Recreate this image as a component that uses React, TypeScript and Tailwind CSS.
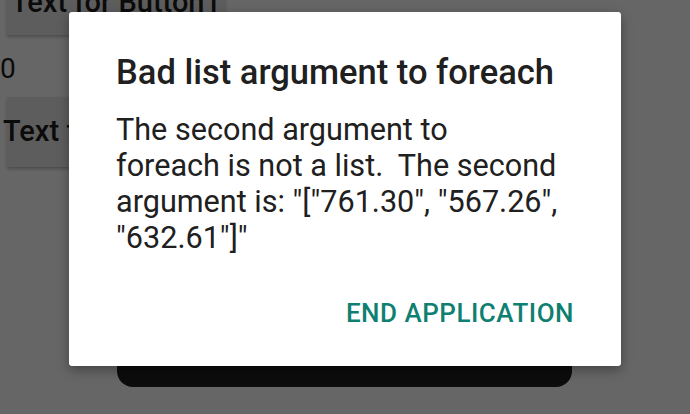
export default function App() {
  return (
    <div className="relative h-[414px] w-[690px] overflow-hidden bg-[#666666] font-['Roboto',sans-serif] text-[#0b0b0b]">
      {/* app content behind the dim */}
      <div className="flex flex-col items-start">
        <div className="ml-[7px] mt-[-30px] flex h-[65px] w-[218px] items-center justify-center bg-[#5d5d5d] shadow-[0_2px_3px_rgba(0,0,0,0.25)]">
          <span className="text-[29px] font-medium">Text for Button1</span>
        </div>
        <span className="mt-[18px] text-[28px] leading-[32px]">0</span>
        <div className="ml-[7px] mt-[12px] flex h-[70px] w-[218px] items-center bg-[#5d5d5d] shadow-[0_2px_3px_rgba(0,0,0,0.25)]">
          <span className="ml-[-4px] text-[29px] font-medium">Text for Button2</span>
        </div>
        <div className="ml-[117px] mt-[150px] h-[70px] w-[455px] rounded-b-[16px] bg-[#0c0c0c]" />
      </div>

      {/* alert dialog */}
      <div className="absolute left-[69px] top-[12px] flex h-[354px] w-[552px] flex-col rounded-[3px] bg-white px-[47px] pt-[39px] shadow-[0_4px_12px_rgba(0,0,0,0.35)]">
        <h2 className="text-[34.5px] font-medium leading-[42px] text-[#202020]">Bad list argument to foreach</h2>
        <p className="mt-[19px] whitespace-pre-wrap text-[30.6px] leading-[36px] text-[#202020]">
          The second argument to<br />
          foreach is not a list.  The second<br />
          argument is: "["761.30", "567.26",<br />
          "632.61"]"
        </p>
        <div className="mt-auto mb-[33px] flex justify-end">
          <button className="text-[26px] font-medium uppercase tracking-[0.5px] text-[#0f7f72]">End Application</button>
        </div>
      </div>
    </div>
  );
}
